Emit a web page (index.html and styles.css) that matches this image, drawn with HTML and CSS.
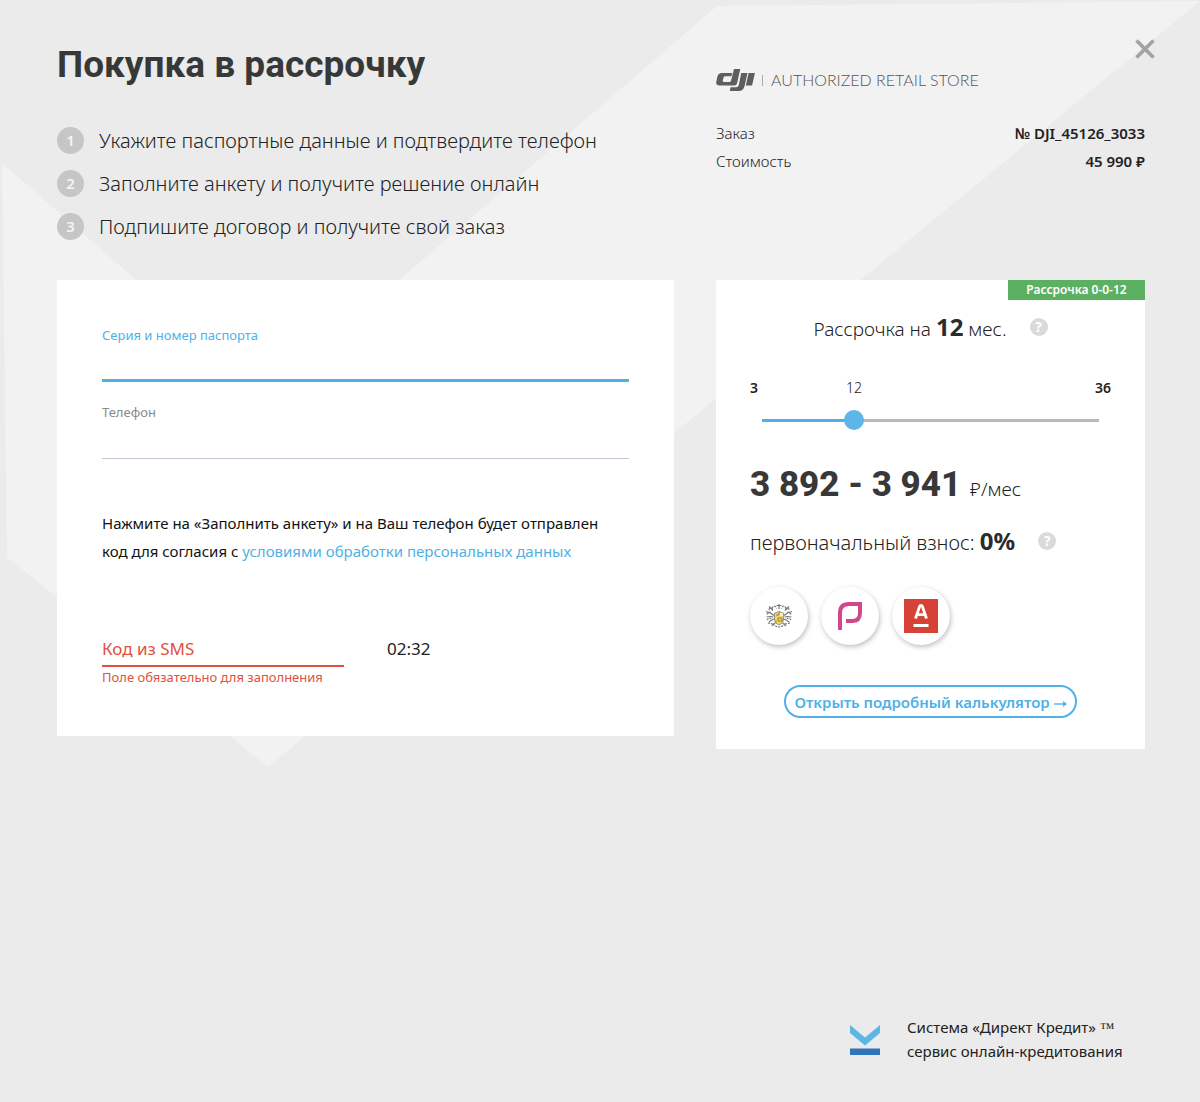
FILE: index.html
```html
<!DOCTYPE html>
<html lang="ru">
<head>
<meta charset="utf-8">
<meta name="viewport" content="width=device-width, initial-scale=1">
<title>Покупка в рассрочку</title>
<link rel="stylesheet" href="styles.css">
</head>
<body>
<div class="page">
  <svg class="backdrop" viewBox="0 0 1200 1102" aria-hidden="true">
    <path d="M717 6 1200 1 268 767 7 557 2 163 267 394z" fill="#f2f2f2"/>
  </svg>
  <button class="close" type="button" aria-label="Закрыть">
    <svg width="20" height="20" viewBox="0 0 20 20"><path d="M1.500 1.500 18.500 18.500M18.500 1.500 1.500 18.500" stroke="#a3a3a3" stroke-width="3.600" fill="none"/></svg>
  </button>

  <header class="columns intro">
    <div>
      <h1 class="title">Покупка в рассрочку</h1>
      <ol class="steps">
        <li class="step"><span class="step-number">1</span>Укажите паспортные данные и подтвердите телефон</li>
        <li class="step"><span class="step-number">2</span>Заполните анкету и получите решение онлайн</li>
        <li class="step"><span class="step-number">3</span>Подпишите договор и получите свой заказ</li>
      </ol>
    </div>
    <div class="order">
      <div class="store">
        <svg width="39" height="22" viewBox="0 0 39 22" fill="#5d5f5f" role="img" aria-label="DJI">
          <path d="M18 0h6.300l-3.200 14.200q-.6 2.200-3 2.200H3.400Q-.4 16.400.3 12.800L1.400 7.500Q2.200 3.900 6 3.900h10.200l-.8 3.300H9.300q-1.500 0-1.800 1.300l-.7 3q-.3 1.500 1 1.500h5.700q1.200 0 1.500-1.300z"/>
          <path d="M25.200 3.900h6.300l-3 13.400q-1 4.700-5.700 4.700h-9l.8-3.700h5.500q2.200 0 2.700-2.200z"/>
          <path d="M32.600 3.900h6.300l-2.800 12.500h-6.300z"/>
        </svg>
        <span class="store-rule"></span>
        <span class="store-name">AUTHORIZED RETAIL STORE</span>
      </div>
      <dl class="facts">
        <div class="fact"><dt>Заказ</dt><dd>№ DJI_45126_3033</dd></div>
        <div class="fact"><dt>Стоимость</dt><dd>45 990 ₽</dd></div>
      </dl>
    </div>
  </header>

  <main class="columns">
    <form class="card form">
      <div class="field field-active">
        <label for="passport">Серия и номер паспорта</label>
        <input id="passport" type="text">
      </div>
      <div class="field">
        <label for="phone">Телефон</label>
        <input id="phone" type="tel">
      </div>
      <p class="consent">Нажмите на «Заполнить анкету» и на Ваш телефон будет отправлен<br>код для согласия с <a href="#terms">условиями обработки персональных данных</a></p>
      <div class="sms">
        <div class="sms-field">
          <input type="text" placeholder="Код из SMS" aria-label="Код из SMS" aria-describedby="sms-error">
          <span class="error" id="sms-error">Поле обязательно для заполнения</span>
        </div>
        <span class="timer">02:32</span>
      </div>
    </form>

    <section class="card plan">
      <span class="badge">Рассрочка 0-0-12</span>
      <div class="term">
        <span>Рассрочка на <b>12</b> мес.</span>
        <button class="help" type="button" aria-label="Справка">?</button>
      </div>
      <div class="scale"><b>3</b><span class="scale-value">12</span><b class="scale-max">36</b></div>
      <input class="slider" type="range" min="3" max="36" value="12" aria-label="Срок рассрочки">
      <p class="price"><b>3 892 - 3 941</b><span>₽/мес</span></p>
      <div class="deposit">
        <span>первоначальный взнос: <b>0%</b></span>
        <button class="help" type="button" aria-label="Справка">?</button>
      </div>
      <div class="banks">
        <span class="bank">
          <svg width="28" height="26" viewBox="0 0 28 26" fill="none">
            <g stroke="#777" stroke-width="1.200">
              <path d="M14 1v5M11.500 2.500h5M4 3.500l4 4M24 3.500l-4 4M1 8.500q5 1 8 4M27 8.500q-5 1-8 4M1.500 14q4-1 7 0M26.500 14q-4-1-7 0M4 19q3-3 6-3M24 19q-3-3-6-3M7 23q2-3 4-3.500M21 23q-2-3-4-3.500"/>
              <path d="M7 5q2.500-4 4.500.5M21 5q-2.500-4-4.500.5M2 11.500q2-4 5-1M26 11.500q-2-4-5-1M2 17q2-3 5.500-1M26 17q-2-3-5.500-1M4 7q0-3 4-1M24 7q0-3-4-1M3 20l5 1M25 20l-5 1" stroke-dasharray="2 1"/>
              <path d="M8 21q6 6 12 0" stroke-dasharray="2 1"/>
            </g>
            <path d="M9.500 10q4.500-3 9 0v7q0 3.500-4.500 5-4.500-1.500-4.500-5z" fill="#f3d45b" stroke="#888" stroke-width=".8"/>
            <path d="M11 12h3V9M13 15h4v3h-4zM11 18v2" stroke="#8d845c"/>
            <path d="M15 10h3v3h-3z" fill="#eee"/>
          </svg>
        </span>
        <span class="bank">
          <svg width="24" height="28" viewBox="0 0 24 28" fill="none" stroke="#d2478a" stroke-width="4">
            <path d="M2 28V11Q2 2 11 2H22V11Q22 19 14 19H8"/>
          </svg>
        </span>
        <span class="bank">
          <svg width="34" height="34" viewBox="0 0 34 34">
            <path d="M0 0h34v34H0z" fill="#d64236"/>
            <path d="M9.500 26.500h15" stroke="#fff" stroke-width="3"/>
            <path d="M11.500 19.500 15.500 7.700q.4-1.200 1.500-1.200t1.500 1.200l4 11.800M13 15.700h8" fill="none" stroke="#fff" stroke-width="2.800"/>
          </svg>
        </span>
      </div>
      <button class="calculator" type="button">Открыть подробный калькулятор <svg width="13" height="8" viewBox="0 0 13 8"><path d="M0 4h10" stroke="currentColor" stroke-width="1.400"/><path d="M9 1 13 4 9 7z" fill="currentColor"/></svg></button>
    </section>
  </main>

  <footer class="footer">
    <svg width="30" height="30" viewBox="0 0 30 30" aria-hidden="true">
      <path d="M0 0 15 12.500 30 0V8L15 20.500 0 8z" fill="#5cb6e8"/>
      <path d="M0 23.500h30V30H0z" fill="#2f74b8"/>
    </svg>
    <p>Система «Директ Кредит» <span class="tm">™</span><br>сервис онлайн-кредитования</p>
  </footer>
</div>
</body>
</html>
```
FILE: styles.css
```css
* { box-sizing: border-box; }

body {
  margin: 0;
  background: #ebebeb;
  color: #222;
  font-family: "Noto Sans", sans-serif;
  font-size: 15px;
}

h1, p, ol, dl, dd { margin: 0; padding: 0; }
button, input { font: inherit; }

.page {
  position: relative;
  display: flex;
  flex-direction: column;
  min-height: 100vh;
  padding: 43px 55px 39px 57px;
}

.backdrop {
  position: absolute;
  top: 0;
  left: 0;
  width: 100%;
  z-index: -1;
}

.close {
  position: absolute;
  top: 39px;
  right: 45px;
  display: flex;
  padding: 0;
  border: 0;
  background: none;
}

.columns {
  display: grid;
  grid-template-columns: minmax(0, 1fr) 429px;
  gap: 42px;
  align-items: start;
}

.intro { margin-bottom: 40px; }

.title {
  color: #373938;
  font-family: Roboto, sans-serif;
  font-size: 37px;
  font-weight: 700;
  line-height: 44px;
}

.steps {
  display: flex;
  flex-direction: column;
  gap: 16px;
  margin-top: 40px;
  list-style: none;
}

.step {
  display: flex;
  align-items: center;
  gap: 15px;
  font-size: 20px;
  font-weight: 300;
  line-height: 27px;
}

.step-number {
  width: 27px;
  border-radius: 50%;
  background: #c6c6c6;
  color: #f4f4f4;
  font-size: 15px;
  font-weight: 600;
  text-align: center;
}

.store {
  display: flex;
  align-items: center;
  margin-top: 26px;
  color: #555;
}

.store-rule {
  width: 1px;
  height: 11px;
  margin: 0 8px 0 7px;
  background: #aaa;
}

.store-name {
  font-family: Lato, sans-serif;
  font-size: 16px;
  font-weight: 300;
  line-height: 22px;
}

.facts {
  margin-top: 28px;
  line-height: 28px;
}

.fact {
  display: flex;
  justify-content: space-between;
}

.fact dt { font-weight: 300; }
.fact dd { font-weight: 600; }

.card { background: #fff; }

.form { padding: 45px 45px 49px; }

.field {
  display: flex;
  flex-direction: column;
  margin-bottom: 20px;
  color: #8a8a8a;
  font-size: 13px;
  line-height: 20px;
}

.field input {
  width: 100%;
  height: 37px;
  padding: 0;
  border: 0;
  border-bottom: 1px solid #c4c4d0;
  outline: 0;
  background: none;
}

.field-active { color: #4fb1e5; }
.field-active input { border-bottom: 3px solid #4fb1e5; }

.consent {
  margin-top: 50px;
  color: #111;
  line-height: 28px;
}

.consent a {
  color: #4fb1e5;
  text-decoration: none;
}

.sms {
  display: flex;
  gap: 43px;
  margin-top: 70px;
}

.sms-field {
  display: flex;
  flex-direction: column;
  width: 242px;
  color: #e2503f;
}

.sms-field input {
  width: 100%;
  height: 32px;
  padding: 0 0 4px;
  border: 0;
  border-bottom: 2px solid #e2503f;
  outline: 0;
  font-size: 17px;
}

.sms-field input::placeholder {
  color: #e2503f;
  opacity: 1;
}

.error {
  font-size: 13px;
  line-height: 20px;
  white-space: nowrap;
}

.timer {
  font-size: 17px;
  line-height: 28px;
}

.plan {
  display: flex;
  flex-direction: column;
  padding: 0 34px 31px;
}

.badge {
  align-self: flex-end;
  width: 137px;
  margin-right: -34px;
  background: #5bb062;
  color: #fff;
  font-size: 12px;
  font-weight: 600;
  line-height: 20px;
  text-align: center;
}

.term, .deposit {
  display: flex;
  align-items: center;
  gap: 23px;
  height: 30px;
  font-weight: 300;
  line-height: 30px;
}

.term b, .deposit b {
  color: #2b2b2b;
  font-size: 24px;
  font-weight: 700;
  line-height: 1;
}

.term {
  justify-content: center;
  margin-top: 14px;
  font-size: 19px;
}

.deposit {
  margin-top: 23px;
  font-size: 20px;
}

.help {
  width: 18px;
  height: 18px;
  margin-bottom: 4px;
  padding: 0;
  border: 0;
  border-radius: 50%;
  background: #dadada;
  color: #fff;
  font-size: 14px;
  font-weight: 700;
  line-height: 18px;
}

.scale {
  display: grid;
  grid-template-columns: 84fr 40fr 237fr;
  margin-top: 34px;
  font-size: 14px;
  line-height: 20px;
}

.scale b { font-weight: 600; }
.scale-value { text-align: center; font-weight: 300; }
.scale-max { text-align: right; }

.slider {
  height: 20px;
  margin: 12px 2px 0;
  -webkit-appearance: none;
  appearance: none;
  background: linear-gradient(90deg, #4fb1e5 27%, #b8b8b8 27%) center / calc(100% - 20px) 3px no-repeat;
}

.slider::-webkit-slider-thumb {
  width: 20px;
  height: 20px;
  -webkit-appearance: none;
  appearance: none;
  border-radius: 50%;
  background: #5cb6e8;
}

.price {
  display: flex;
  align-items: baseline;
  gap: 9px;
  height: 40px;
  margin-top: 35px;
  font-size: 19px;
  font-weight: 300;
  line-height: 40px;
}

.price b {
  color: #373938;
  font-family: Roboto, sans-serif;
  font-size: 35px;
  font-weight: 800;
}

.banks {
  display: flex;
  gap: 13px;
  margin-top: 29px;
}

.bank {
  display: flex;
  align-items: center;
  justify-content: center;
  width: 58px;
  height: 58px;
  border-radius: 50%;
  background: #fff;
  box-shadow: 1px 2px 5px rgba(0, 0, 0, 0.25);
}

.calculator {
  align-self: center;
  width: 293px;
  height: 33px;
  margin-top: 40px;
  padding: 0;
  border: 2px solid #4fb1e5;
  border-radius: 17px;
  background: #fff;
  color: #4fb1e5;
  font-size: 15px;
  font-weight: 600;
  line-height: 28px;
}

.footer {
  display: flex;
  align-self: flex-end;
  align-items: center;
  gap: 27px;
  width: 429px;
  margin-top: auto;
  padding-left: 134px;
  line-height: 23px;
}

.tm { font-family: "Liberation Serif", serif; }
```
